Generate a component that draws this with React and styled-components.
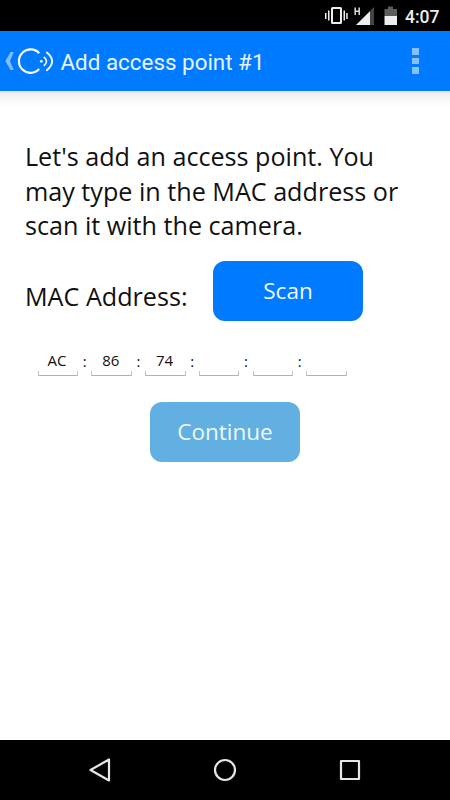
import styled, { createGlobalStyle } from 'styled-components'

const GlobalStyle = createGlobalStyle`
    * {
        box-sizing: border-box;
    }

    body {
        margin: 0;
        background: #fff;
    }
`

const Screen = styled.div`
    display: flex;
    flex-direction: column;
    width: 450px;
    height: 800px;
    overflow: hidden;
    background: #fff;
    color: #111;
    font-family: 'Open Sans', 'Noto Sans', sans-serif;
`

const StatusBar = styled.div`
    display: flex;
    flex-shrink: 0;
    justify-content: flex-end;
    height: 31px;
    padding-right: 10px;
    background: #000;
`

const StatusIcons = styled.svg`
    width: 80px;
    height: 31px;
`

const Clock = styled.span`
    width: 35px;
    color: #ececec;
    font: 500 17.5px/34px Roboto, sans-serif;
    white-space: nowrap;
`

const AppBar = styled.header`
    display: flex;
    flex-shrink: 0;
    align-items: center;
    height: 60px;
    background: #007aff;
`

const Logo = styled.svg`
    width: 60px;
    height: 60px;
`

const Title = styled.h1`
    flex: 1;
    margin: 0;
    padding: 2px 0 0 0.5px;
    color: #e8f3ff;
    font: 400 22.4px/58px Roboto, sans-serif;
`

const MenuButton = styled.button`
    display: flex;
    flex-direction: column;
    gap: 3px;
    margin: 0 31px 0 0;
    padding: 0;
    border: 0;
    background: none;
`

const MenuDot = styled.span`
    width: 7px;
    height: 6.5px;
    background: #86c0ff;
`

const Content = styled.main`
    display: flex;
    flex: 1;
    flex-direction: column;
    padding: 48.4px 25px 0;
    background: linear-gradient(#e2e2e2, #f0f0f0 3px, #f7f7f7 8px, #fff 16px) no-repeat;
`

const Intro = styled.p`
    margin: 0;
    font-size: 25.15px;
    line-height: 34.2px;
    white-space: nowrap;
`

const ScanRow = styled.div`
    display: flex;
    height: 60px;
    margin-top: 18.5px;
`

const Label = styled.span`
    width: 188px;
    padding-top: 11px;
    font-size: 25.15px;
    line-height: 48px;
    white-space: nowrap;
`

const Button = styled.button`
    width: 150px;
    height: 60px;
    padding: 0 0 1px;
    border: 0;
    border-radius: 12px;
    background: ${({ $muted }) => ($muted ? '#62b0e1' : '#007aff')};
    color: #f0f8ff;
    font: 400 22.5px/59px 'Open Sans', sans-serif;
`

const MacRow = styled.div`
    display: flex;
    margin: 25px 0 0 12.5px;
`

const Octet = styled.div`
    width: 40.5px;
    height: 30px;
    padding: 4px 1.5px 0 0;
    background:
        linear-gradient(#c4c4c4, #c4c4c4) left bottom / 1px 5px no-repeat,
        linear-gradient(#c4c4c4, #c4c4c4) right bottom / 1px 5px no-repeat,
        linear-gradient(#b0b0b0, #b0b0b0) left bottom / 100% 1px no-repeat;
    font-size: 15px;
    line-height: 20px;
    text-align: center;
`

const Colon = styled.span`
    width: 13.25px;
    padding-top: 5px;
    font-size: 15px;
    line-height: 20px;
    text-align: center;
`

const ContinueButton = styled(Button)`
    align-self: center;
    margin-top: 26px;
`

const NavBar = styled.nav`
    display: flex;
    flex-shrink: 0;
    align-items: center;
    justify-content: center;
    gap: 101px;
    height: 60px;
    background: #000;
`

const NavIcon = styled.svg`
    width: 24px;
    height: 24px;
    fill: none;
    stroke: #e6e6e6;
    stroke-width: 2.2;
    stroke-linejoin: round;
`

const octets = ['AC', '86', '74', '', '', '']

function StatusBarIcons() {
    return (
        <StatusIcons viewBox="325 0 80 31" fill="#eee">
            {/* vibrate */}
            <rect
                x="332"
                y="8"
                width="9"
                height="15"
                rx="0.5"
                fill="none"
                stroke="#eee"
                strokeWidth="2"
            />
            <path d="M325 13h1.5v6H325zM328 10.5h1.5v10H328zM343.5 10.5h1.5v10h-1.5zM346.2 13h1.5v6h-1.5z" />
            {/* signal */}
            <path d="M374 7v18h-18z" fill="#444" />
            <path d="M370 11.2V25h-14z" />
            <path
                d="M355.2 7.5v7.5M359.2 7.5v7.5M355.2 11.2h4"
                stroke="#ddd"
                strokeWidth="1.5"
            />
            {/* battery */}
            <path d="M388 6.5h5V9h4v7h-12.5V9h3.5z" fill="#5c5c5c" />
            <path d="M384.5 16H397v9h-12.5z" />
        </StatusIcons>
    )
}

function AppLogo() {
    return (
        <Logo viewBox="0 31 60 60" fill="none" stroke="#f5faff">
            <path
                d="M10.5 52h3.3l-3.8 9 3.8 9h-3.3l-5.2-9z"
                fill="#80bdff"
                stroke="none"
            />
            <path
                d="M39.2 53.2A11.7 11.7 0 1 0 39.2 69.1"
                strokeWidth="2.2"
            />
            <circle cx="41.3" cy="61.3" r="1.4" fill="#f5faff" stroke="none" />
            <path d="M43.8 56.8Q49.2 61.3 43.8 65.8" strokeWidth="1.6" />
            <path d="M46.3 52Q58 61.3 46.3 70.8" strokeWidth="1.9" />
        </Logo>
    )
}

function MacFields() {
    return (
        <MacRow>
            {octets.map((octet, i) => [
                i > 0 && <Colon key={`colon-${i}`}>:</Colon>,
                <Octet key={i}>{octet}</Octet>,
            ])}
        </MacRow>
    )
}

function App() {
    return (
        <Screen>
            <GlobalStyle />
            <StatusBar>
                <StatusBarIcons />
                <Clock>4:07</Clock>
            </StatusBar>
            <AppBar>
                <AppLogo />
                <Title>Add access point #1</Title>
                <MenuButton aria-label="Menu">
                    <MenuDot />
                    <MenuDot />
                    <MenuDot />
                </MenuButton>
            </AppBar>
            <Content>
                <Intro>
                    Let's add an access point. You
                    <br />
                    may type in the MAC address or
                    <br />
                    scan it with the camera.
                </Intro>
                <ScanRow>
                    <Label>MAC Address:</Label>
                    <Button>Scan</Button>
                </ScanRow>
                <MacFields />
                <ContinueButton $muted>Continue</ContinueButton>
            </Content>
            <NavBar>
                <NavIcon viewBox="0 0 24 24">
                    <path d="M21 1.5v21L2.5 12z" />
                </NavIcon>
                <NavIcon viewBox="0 0 24 24">
                    <circle cx="12" cy="12" r="10" />
                </NavIcon>
                <NavIcon viewBox="0 0 24 24">
                    <rect x="3" y="3" width="18" height="18" />
                </NavIcon>
            </NavBar>
        </Screen>
    )
}

export default App
